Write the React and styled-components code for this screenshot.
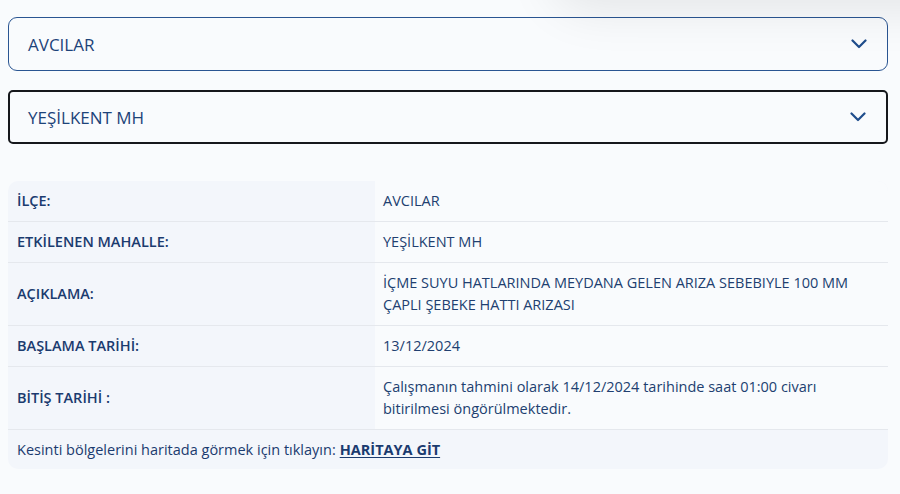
import React from 'react';
import styled, { createGlobalStyle } from 'styled-components';

const GlobalStyle = createGlobalStyle`
    html, body {
        margin: 0;
        padding: 0;
        background: #f9fbfd;
        font-family: "Open Sans", Lato, sans-serif;
        color: #1c3d72;
    }
`;

const Page = styled.div`
    position: relative;
    width: 900px;
    height: 494px;
    overflow: hidden;
    padding: 17px 12px 0 8px;
    box-sizing: border-box;
    display: flex;
    flex-direction: column;
`;

// soft shadow cast by the header that sits above the page
const HeaderShadow = styled.div`
    position: absolute;
    top: -60px;
    left: 560px;
    width: 420px;
    height: 60px;
    border-radius: 30px;
    box-shadow: 0 0 50px 10px rgba(0, 0, 0, 0.09);
    pointer-events: none;
`;

const Select = styled.div`
    height: 54px;
    flex-shrink: 0;
    box-sizing: border-box;
    display: flex;
    align-items: center;
    justify-content: space-between;
    padding: 0 20px 0 ${props => props.focused ? 18 : 19}px;
    border: ${props => props.focused ? '2px solid #16181c' : '1px solid #2a5592'};
    border-radius: ${props => props.focused ? 5 : 9}px;
    font-size: 17px;
    font-weight: 500;
    color: #1d4379;
    margin-bottom: ${props => props.gap}px;
`;

const Chevron = () => (
    <svg width="16" height="10" viewBox="0 0 16 10" fill="none">
        <path d="M1.5 1.5 L8 8 L14.5 1.5" stroke="#1f4d8c" strokeWidth="2.2" strokeLinecap="round" strokeLinejoin="round" />
    </svg>
);

const Table = styled.div`
    border-radius: 10px;
    overflow: hidden;
    background: #f3f6fb;
`;

const Row = styled.div`
    display: grid;
    grid-template-columns: 367px 1fr;
    height: ${props => props.height}px;
    border-bottom: 1px solid #e5e8ed;
`;

const Label = styled.div`
    display: flex;
    align-items: center;
    padding: 0 0 1px 9px;
    font-size: 14.5px;
    font-weight: 600;
    color: #1b3b6f;
`;

const Value = styled.div`
    display: flex;
    align-items: center;
    padding: 0 20px 1px 8px;
    background: #f9fbfd;
    font-size: 14.5px;
    line-height: 22px;
    color: #213f70;
`;

const Footer = styled.div`
    height: 39px;
    display: flex;
    align-items: center;
    padding-left: 9px;
    font-size: 14.5px;
    color: #1b3b6f;
`;

const MapLink = styled.a`
    margin-left: 4px;
    font-weight: 700;
    color: #1b3b6f;
    text-decoration: underline;
    text-underline-offset: 2px;
`;

const rows = [
    { label: 'İLÇE:', value: 'AVCILAR', height: 40 },
    { label: 'ETKİLENEN MAHALLE:', value: 'YEŞİLKENT MH', height: 40 },
    { label: 'AÇIKLAMA:', value: 'İÇME SUYU HATLARINDA MEYDANA GELEN ARIZA SEBEBIYLE 100 MM ÇAPLI ŞEBEKE HATTI ARIZASI', height: 62 },
    { label: 'BAŞLAMA TARİHİ:', value: '13/12/2024', height: 40 },
    { label: 'BİTİŞ TARİHİ :', value: 'Çalışmanın tahmini olarak 14/12/2024 tarihinde saat 01:00 civarı bitirilmesi öngörülmektedir.', height: 62 },
];

function App() {
    return (
        <Page>
            <GlobalStyle />
            <HeaderShadow />
            <Select gap={19}>
                AVCILAR
                <Chevron />
            </Select>
            <Select focused gap={37}>
                YEŞİLKENT MH
                <Chevron />
            </Select>
            <Table>
                {rows.map(r => (
                    <Row key={r.label} height={r.height}>
                        <Label>{r.label}</Label>
                        <Value>{r.value}</Value>
                    </Row>
                ))}
                <Footer>
                    Kesinti bölgelerini haritada görmek için tıklayın:
                    <MapLink href="#">HARİTAYA GİT</MapLink>
                </Footer>
            </Table>
        </Page>
    );
}

export default App;
